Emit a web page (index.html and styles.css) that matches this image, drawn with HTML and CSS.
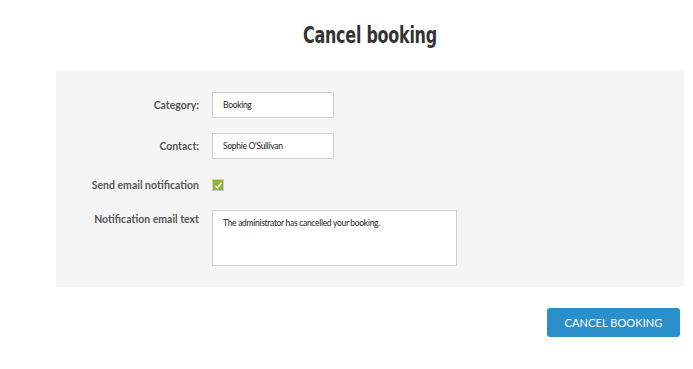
FILE: index.html
```html
<!DOCTYPE html>
<html lang="en">
<head>
    <meta charset="UTF-8">
    <title>Cancel booking</title>
    <link rel="stylesheet" href="styles.css">
</head>
<body>
    <div class="page">
        <h1 class="title"><span>Cancel booking</span></h1>

        <form class="panel">
            <div class="row">
                <label class="label">Category:</label>
                <div class="field">Booking</div>
            </div>
            <div class="row">
                <label class="label">Contact:</label>
                <div class="field">Sophie O'Sullivan</div>
            </div>
            <div class="row row-check">
                <label class="label">Send email notification</label>
                <span class="check">
                    <svg width="9" height="9" viewBox="0 0 9 9" fill="none" stroke="#fff" stroke-width="1.6">
                        <polyline points="1.5 4.8 3.5 6.8 7.5 1.8"></polyline>
                    </svg>
                </span>
            </div>
            <div class="row row-top">
                <label class="label">Notification email text</label>
                <div class="field area">The administrator has cancelled your booking.</div>
            </div>
        </form>

        <div class="actions">
            <button class="button">CANCEL BOOKING</button>
        </div>
    </div>
</body>
</html>
```

FILE: styles.css
```css
body {
    margin: 0;
    background: #fff;
    font-family: 'Lato', sans-serif;
    color: #444;
}

.page {
    width: 628px;
    margin-left: 56px;
}

.title {
    margin: 21px 0 0;
    height: 50px;
    text-align: center;
    font-family: 'DejaVu Sans', sans-serif;
    font-stretch: condensed;
    font-weight: bold;
    font-size: 23px;
    line-height: 28px;
    color: #333;
}

.title span {
    display: inline-block;
    transform: scaleX(0.77);
    letter-spacing: -0.3px;
}

.panel {
    background: #f5f5f5;
    padding: 21px 0;
    display: flex;
    flex-direction: column;
    gap: 15px;
}

.row {
    display: flex;
    align-items: center;
    gap: 13px;
}

.row-check {
    height: 12px;
    margin-top: 5px;
    margin-bottom: 4px;
}

.row-top {
    align-items: flex-start;
}

.label {
    width: 143px;
    text-align: right;
    font-size: 10.5px;
    line-height: 14px;
    font-weight: bold;
    color: #555;
}

.row-top .label {
    padding-top: 2px;
}

.field {
    box-sizing: border-box;
    width: 122px;
    height: 26px;
    padding: 0 10px;
    border: 1px solid #ccd0d6;
    background: #fff;
    font-size: 8.5px;
    letter-spacing: -0.3px;
    line-height: 24px;
    color: #222;
}

.area {
    width: 245px;
    height: 56px;
    line-height: 14px;
    padding-top: 5px;
}

.check {
    box-sizing: border-box;
    width: 12px;
    height: 12px;
    border: 1px solid #c5ccd6;
    background: #8cb82b;
    display: flex;
    align-items: center;
    justify-content: center;
}

.actions {
    display: flex;
    justify-content: flex-end;
    padding: 21px 4px 0 0;
}

.button {
    width: 133px;
    height: 29px;
    border: none;
    border-radius: 3px;
    background: #2b8fcb;
    color: #fff;
    font-family: 'Lato', sans-serif;
    font-size: 11px;
    letter-spacing: 0.1px;
}
```
